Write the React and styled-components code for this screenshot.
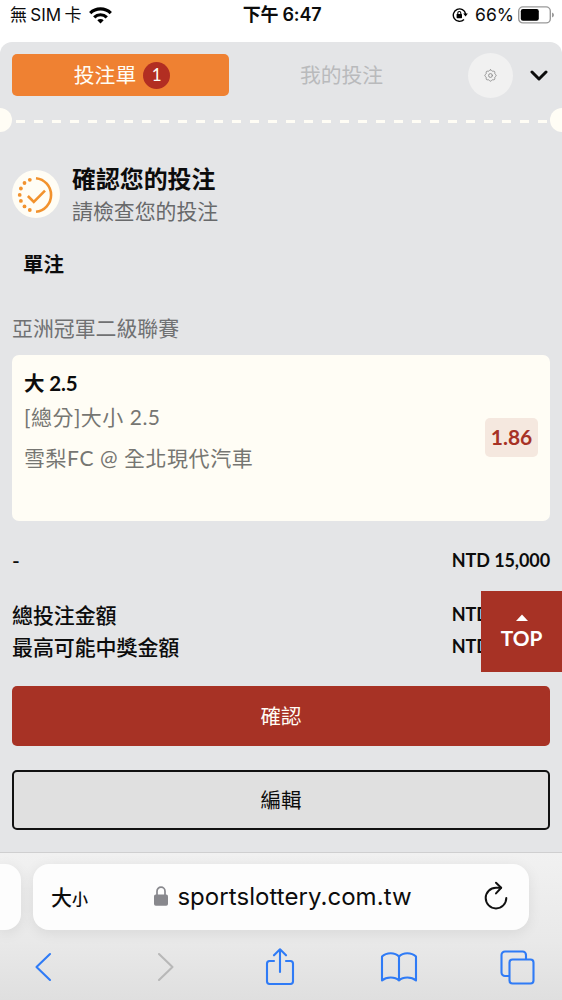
import React from "react"
import styled, { createGlobalStyle } from "styled-components"

const GlobalStyle = createGlobalStyle`
  * {
    box-sizing: border-box;
  }

  body {
    margin: 0;
    background: #fff;
    color: #0c0c0c;
    font-family: Lato, "Noto Sans CJK TC", sans-serif;
  }

  button {
    border: 0;
    padding: 0;
    background: none;
    font: inherit;
  }

  svg {
    display: block;
    flex: none;
  }
`

const Screen = styled.div`
  position: relative;
  display: flex;
  flex-direction: column;
  width: 562px;
  height: 1000px;
  overflow: hidden;
`

const StatusBar = styled.header`
  display: grid;
  flex: none;
  grid-template-columns: 1fr auto 1fr;
  align-items: center;
  height: 42px;
  padding: 0 8px 12px 10px;
  font-family: Inter, "Noto Sans CJK TC", sans-serif;
  font-size: 17px;
  line-height: 30px;
`

const StatusGroup = styled.div`
  display: flex;
  align-items: center;
  justify-content: ${(p) => (p.$end ? "flex-end" : "flex-start")};
  gap: ${(p) => p.$gap}px;
  white-space: nowrap;
`

const Carrier = styled.span`
  word-spacing: -1.5px;
`

const Percent = styled.span`
  margin: 0 -1px 0 2px;
  font-size: 17.5px;
`

const Clock = styled.div`
  font-weight: 600;
  font-size: 18px;
  letter-spacing: -0.2px;
`

const Sheet = styled.main`
  flex: none;
  height: 810px;
  padding: 10px 12px 0;
  border-radius: 12px 12px 0 0;
  background: #e4e5e7;
`

const Tabs = styled.nav`
  display: flex;
  align-items: center;
  height: 46px;
`

const Tab = styled.button`
  display: flex;
  align-items: center;
  justify-content: center;
  gap: 7px;
  width: 217px;
  height: 42px;
  margin-right: 4px;
  padding-left: ${(p) => (p.$active ? 3 : 0)}px;
  border-radius: 5px;
  background: ${(p) => (p.$active ? "#ef8132" : "transparent")};
  color: ${(p) => (p.$active ? "#fffdf5" : "#b9babc")};
  font-size: 20.8px;
  line-height: 42px;
`

const Count = styled.span`
  width: 27px;
  height: 27px;
  border-radius: 50%;
  background: #b22e22;
  font-size: 17px;
  line-height: 26px;
  text-align: center;
`

const Settings = styled.button`
  display: flex;
  align-items: center;
  justify-content: center;
  width: 45px;
  height: 45px;
  margin: 0 17px 0 14px;
  border-radius: 50%;
  background: #f1f1f1;
`

const Tear = styled.div`
  display: flex;
  align-items: center;
  justify-content: space-between;
  height: 24px;
  margin: 10px -24px 0;
`

const Notch = styled.span`
  width: 24px;
  height: 24px;
  border-radius: 50%;
  background: #fffdf5;
`

const Dashes = styled.span`
  flex: 1;
  height: 3px;
  margin: 3px 3px 0 4px;
  background: repeating-linear-gradient(
    90deg,
    #fffdf5 0 9px,
    transparent 9px 18px
  );
`

const Intro = styled.section`
  display: flex;
  height: 66px;
  margin-top: 31px;
`

const IntroIcon = styled.div`
  width: 48px;
  height: 48px;
  margin: 7px 12px 0 0;
  border-radius: 50%;
  background: #fffdf5;
`

const Title = styled.h1`
  margin: -1px 0 0;
  font-size: 23.9px;
  font-weight: 700;
  line-height: 33px;
`

const Subtitle = styled.p`
  margin: -1px 0 0;
  color: #68696b;
  font-size: 20.9px;
  line-height: 33px;
`

const BetType = styled.h2`
  margin: 14px 0 23px;
  padding-left: 11px;
  font-size: 20.5px;
  font-weight: 700;
  line-height: 42px;
`

const League = styled.p`
  margin: 0 0 7px;
  color: #707173;
  font-size: 20.9px;
  line-height: 40px;
`

const Card = styled.article`
  display: flex;
  align-items: center;
  justify-content: space-between;
  height: 166px;
  padding: 0 12px;
  border-radius: 7px;
  background: #fffdf5;
`

const CardText = styled.div`
  align-self: stretch;
  padding-top: 11px;
  color: #767672;
  font-size: 21px;
  line-height: 34px;
  white-space: nowrap;
`

const Pick = styled.div`
  color: #0c0c0c;
  font-size: 20.5px;
  font-weight: 700;
  letter-spacing: -0.1px;
`

const Market = styled.div`
  letter-spacing: 0.5px;
`

const Match = styled.div`
  margin-top: 7px;
  letter-spacing: 0.55px;
`

const Odds = styled.div`
  width: 53px;
  height: 39px;
  margin-top: -1px;
  border-radius: 5px;
  background: #f5e8df;
  color: #a73225;
  font-size: 21px;
  font-weight: 700;
  line-height: 38px;
  text-align: center;
`

const AmountRow = styled.div`
  display: flex;
  justify-content: space-between;
  font-size: 18px;
  font-weight: 700;
  letter-spacing: -0.1px;
  line-height: ${(p) => p.$height}px;
`

const AmountLabel = styled.span`
  font-size: 21px;
  font-weight: 500;
`

const Totals = styled.section`
  height: 64px;
  margin: 18px 0 23px;
`

const Stake = styled.section`
  height: 41px;
  margin-top: 19px;
`

const Action = styled.button`
  display: block;
  width: 100%;
  height: 60px;
  margin-bottom: 24px;
  padding-bottom: 2px;
  border: ${(p) => (p.$primary ? "0" : "2px solid #111")};
  border-radius: 5px;
  background: ${(p) => (p.$primary ? "#a73225" : "#e0e0e0")};
  color: ${(p) => (p.$primary ? "#fffdf5" : "#0c0c0c")};
  font-size: 20.5px;
`

const TopButton = styled.button`
  position: absolute;
  top: 591px;
  right: 0;
  display: flex;
  flex-direction: column;
  align-items: center;
  width: 81px;
  height: 81px;
  padding-top: 23px;
  background: #a73225;
  color: #fff;
  font-size: 20.8px;
  font-weight: 700;
  line-height: 34px;
`

const Browser = styled.footer`
  flex: 1;
  min-height: 0;
  border-top: 1px solid #cfcfd0;
  background: linear-gradient(#f1f1f1, #e9e9e9 60%, #dfdfdf);
`

const AddressRow = styled.div`
  display: flex;
  gap: 12px;
  padding-top: 11px;
`

const PreviousPage = styled.div`
  width: 21px;
  height: 66px;
  border-radius: 0 16px 16px 0;
  background: #fdfdfd;
  box-shadow: 0 3px 14px rgba(0, 0, 0, 0.08);
`

const Address = styled.div`
  display: grid;
  grid-template-columns: 60px 1fr 60px;
  align-items: center;
  width: 496px;
  height: 66px;
  padding: 0 20px 2px 18px;
  border-radius: 16px;
  background: #fdfdfd;
  box-shadow: 0 3px 14px rgba(0, 0, 0, 0.08);
  font-family: Inter, "Noto Sans CJK TC", sans-serif;

  > svg {
    justify-self: end;
  }
`

const TextSize = styled.span`
  font-size: 21px;
  font-weight: 500;
  white-space: nowrap;

  small {
    font-size: 16px;
  }
`

const Domain = styled.div`
  display: flex;
  align-items: center;
  justify-content: center;
  gap: 9px;
  padding-left: 6px;
  font-size: 24px;
  letter-spacing: 0.05px;
`

const Toolbar = styled.nav`
  display: flex;
  align-items: center;
  justify-content: space-between;
  height: 70px;
  padding: 0 26px 0 24px;
  margin-top: 2px;
`

const Tool = styled.button`
  display: flex;
  justify-content: center;
  width: 38px;
`

const Stroke = ({ size, width, height, color = "#2f7bf6", weight = 2.1, children }) => (
  <svg
    width={width || size}
    height={height || size}
    viewBox={`0 0 ${width || size} ${height || size}`}
    fill="none"
    stroke={color}
    strokeWidth={weight}
    strokeLinecap="round"
    strokeLinejoin="round"
  >
    {children}
  </svg>
)

const WifiIcon = () => (
  <svg width="23" height="17" viewBox="0 0 23 17" fill="none" stroke="#000" strokeWidth="3.2">
    <path d="M1.2 6.1a14.8 14.8 0 0 1 20.6 0" />
    <path d="M5.2 10.3a9 9 0 0 1 12.6 0" />
    <path d="M11.5 16.5 8.3 13.3a4.6 4.6 0 0 1 6.4 0Z" fill="#000" stroke="none" />
  </svg>
)

const RotationLockIcon = () => (
  <svg width="16" height="16" viewBox="0 0 16 16" fill="none" stroke="#000" strokeWidth="1.4">
    <path d="M13.6 7A6.2 6.2 0 1 0 12 12.4" />
    <path d="M11.2 6.4h4.6l-2.2 3.2Z" fill="#000" stroke="none" />
    <rect x="4.6" y="7" width="5.4" height="4.2" rx="0.6" fill="#000" stroke="none" />
    <path d="M5.8 7.2V6a1.5 1.5 0 0 1 3 0v1.2" strokeWidth="1.1" />
  </svg>
)

const BatteryIcon = () => (
  <svg width="36" height="18" viewBox="0 0 36 18">
    <rect x="0.7" y="0.9" width="31.6" height="16" rx="4.2" fill="none" stroke="#9a9a9a" strokeWidth="1.4" />
    <rect x="2.8" y="3" width="18" height="11.8" rx="2.2" fill="#000" />
    <path d="M34 6.4q2 .8 2 2.5t-2 2.5Z" fill="#9a9a9a" />
  </svg>
)

const teeth = Array.from({ length: 65 }, (_, i) => {
  const a = (i / 64) * Math.PI * 2
  const r = 5.2 + 0.5 * Math.cos(a * 8)
  return `${(6.5 + r * Math.sin(a)).toFixed(2)},${(6.5 - r * Math.cos(a)).toFixed(2)}`
}).join(" ")

const GearIcon = () => (
  <Stroke size={13} color="#929292" weight={1}>
    <polyline points={teeth} />
    <circle cx="6.5" cy="6.5" r="1.9" />
  </Stroke>
)

const dots = [
  [17.8, 9.8],
  [12.5, 13],
  [8.9, 18.5],
  [7.7, 24.9],
  [8.9, 30.9],
  [12.5, 36.4],
  [17.8, 40],
]

const PendingCheckIcon = () => (
  <svg width="48" height="48" viewBox="0 0 48 48" fill="none" stroke="#f2922d" strokeWidth="2.6">
    <path d="M24 8.2a16.9 16.9 0 0 1 0 33.6" />
    <path d="m15.9 26 5.9 6L33 20.700" />
    {dots.map(([x, y]) => (
      <circle key={y} cx={x} cy={y} r="1.9" fill="#f2922d" stroke="none" />
    ))}
  </svg>
)

const LockIcon = () => (
  <svg width="14" height="20" viewBox="0 0 14 20">
    <rect y="8.4" width="14" height="11.4" rx="1.8" fill="#88888d" />
    <path d="M3 9V5.2a4 4 0 0 1 8 0V9" fill="none" stroke="#88888d" strokeWidth="1.7" />
  </svg>
)

const App = () => (
  <Screen>
    <GlobalStyle />
    <StatusBar>
      <StatusGroup $gap={8}>
        <Carrier>無 SIM 卡</Carrier>
        <WifiIcon />
      </StatusGroup>
      <Clock>下午 6:47</Clock>
      <StatusGroup $end $gap={5}>
        <RotationLockIcon />
        <Percent>66%</Percent>
        <BatteryIcon />
      </StatusGroup>
    </StatusBar>

    <Sheet>
      <Tabs>
        <Tab $active>
          投注單
          <Count>1</Count>
        </Tab>
        <Tab>我的投注</Tab>
        <Settings aria-label="設定">
          <GearIcon />
        </Settings>
        <Stroke width={18} height={12} color="#0c0c0c" weight={3}>
          <path d="m2 3 7 7 7-7" />
        </Stroke>
      </Tabs>

      <Tear>
        <Notch />
        <Dashes />
        <Notch />
      </Tear>

      <Intro>
        <IntroIcon>
          <PendingCheckIcon />
        </IntroIcon>
        <div>
          <Title>確認您的投注</Title>
          <Subtitle>請檢查您的投注</Subtitle>
        </div>
      </Intro>

      <BetType>單注</BetType>
      <League>亞洲冠軍二級聯賽</League>

      <Card>
        <CardText>
          <Pick>大 2.5</Pick>
          <Market>[總分]大小 2.5</Market>
          <Match>雪梨FC @ 全北現代汽車</Match>
        </CardText>
        <Odds>1.86</Odds>
      </Card>

      <Stake>
        <AmountRow $height={41}>
          <AmountLabel>-</AmountLabel>
          <span>NTD 15,000</span>
        </AmountRow>
      </Stake>
      <Totals>
        <AmountRow $height={31.5}>
          <AmountLabel>總投注金額</AmountLabel>
          <span>NTD 15,000</span>
        </AmountRow>
        <AmountRow $height={31.5}>
          <AmountLabel>最高可能中獎金額</AmountLabel>
          <span>NTD 27,900</span>
        </AmountRow>
      </Totals>

      <Action $primary>確認</Action>
      <Action>編輯</Action>
    </Sheet>

    <TopButton>
      <svg width="14" height="7" viewBox="0 0 14 7">
        <path d="M1 7 7 .5 13 7Z" fill="#fff" />
      </svg>
      TOP
    </TopButton>

    <Browser>
      <AddressRow>
        <PreviousPage />
        <Address>
          <TextSize>
            大<small>小</small>
          </TextSize>
          <Domain>
            <LockIcon />
            sportslottery.com.tw
          </Domain>
          <Stroke width={26} height={30} color="#111" weight={2}>
            <path d="M18 6.8H13a10.3 10.3 0 1 0 10.3 10.3" />
            <path d="m13 1.8 5.2 5-5.2 5.6" />
          </Stroke>
        </Address>
      </AddressRow>
      <Toolbar>
        <Tool aria-label="上一頁">
          <Stroke width={30} height={30}>
            <path d="M22 2 8.500 15 22 28" />
          </Stroke>
        </Tool>
        <Tool aria-label="下一頁">
          <Stroke width={30} height={30} color="#b8b8b8">
            <path d="m12 2 13.500 13L12 28" />
          </Stroke>
        </Tool>
        <Tool aria-label="分享">
          <Stroke width={30} height={38}>
            <path d="M9 13H4.500A2.600 2.600 0 0 0 2 15.500v18a2.600 2.600 0 0 0 2.500 2.500h21a2.600 2.600 0 0 0 2.500-2.500v-18a2.600 2.600 0 0 0-2.500-2.500H21" />
            <path d="M15 24V1.500M9 7.300l6-6 6 6" />
          </Stroke>
        </Tool>
        <Tool aria-label="書籤">
          <Stroke width={38} height={32}>
            <path d="M19 5.500C15 1.200 6.500 1.200 2 5.500v24c4.500-4 13-4 17 0 4-4 12.500-4 17 0v-24c-4.500-4.300-13-4.300-17 0v24" />
          </Stroke>
        </Tool>
        <Tool aria-label="分頁">
          <Stroke width={35} height={35}>
            <rect x="9.500" y="9.500" width="24" height="24" rx="3" />
            <path d="M9 26H5a3.500 3.500 0 0 1-3.500-3.500V5A3.500 3.500 0 0 1 5 1.500h17.500A3.500 3.500 0 0 1 26 5v4" />
          </Stroke>
        </Tool>
      </Toolbar>
    </Browser>
  </Screen>
)

export default App
